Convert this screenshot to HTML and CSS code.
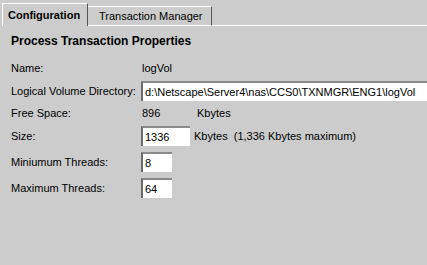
FILE: index.html
```html
<!DOCTYPE html>
<html>
<head>
<meta charset="utf-8">
<link rel="stylesheet" href="styles.css">
</head>
<body>
<div class="tabs">
  <div class="tab active">Configuration</div>
  <div class="tab">Transaction Manager</div>
  <div class="tab-fill"></div>
</div>
<div class="panel">
  <div class="heading">Process Transaction Properties</div>
  <div class="row r-name">
    <div class="label">Name:</div>
    <div class="value">logVol</div>
  </div>
  <div class="row r-dir">
    <div class="label">Logical Volume Directory:</div>
    <div class="field wide">d:\Netscape\Server4\nas\CCS0\TXNMGR\ENG1\logVol</div>
  </div>
  <div class="row r-free">
    <div class="label">Free Space:</div>
    <div class="value num">896</div>
    <div class="unit">Kbytes</div>
  </div>
  <div class="row r-size">
    <div class="label">Size:</div>
    <div class="field size">1336</div>
    <div class="unit">Kbytes&nbsp; (1,336 Kbytes maximum)</div>
  </div>
  <div class="row r-min">
    <div class="label">Miniumum Threads:</div>
    <div class="field small">8</div>
  </div>
  <div class="row r-max">
    <div class="label">Maximum Threads:</div>
    <div class="field small">64</div>
  </div>
</div>
</body>
</html>
```
FILE: styles.css
```css
html, body {
  margin: 0;
  padding: 0;
  background: #cccccc;
}
body {
  width: 427px;
  height: 265px;
  overflow: hidden;
  font-family: "Liberation Sans", Arial, sans-serif;
  font-size: 11px;
  color: #000;
}
.tabs {
  display: flex;
  align-items: flex-end;
  padding: 3px 0 0 2px;
  height: 23px;
}
.tab {
  box-sizing: border-box;
  flex: none;
  height: 20px;
  line-height: 18px;
  white-space: nowrap;
  border-top: 1px solid #ffffff;
  border-right: 1px solid #555555;
  border-bottom: 1px solid #ffffff;
  padding: 0 0 0 11px;
  width: 124px;
}
.tab.active {
  height: 23px;
  line-height: 22px;
  font-weight: bold;
  border-left: 1px solid #ffffff;
  border-bottom: none;
  padding: 0 0 0 5px;
  width: 86px;
}
.tab-fill {
  flex: 1;
  border-bottom: 1px solid #ffffff;
  height: 0;
}
.panel {
  padding: 7px 0 0 11px;
}
.heading {
  font-weight: bold;
  font-size: 12px;
  line-height: 16px;
  height: 16px;
  margin-bottom: 9px;
}
.row {
  display: flex;
  align-items: center;
  height: 20px;
}
.r-dir { margin-top: 3px; }
.r-free { margin-top: 2px; }
.r-size { margin-top: 3px; }
.r-min { margin-top: 6px; }
.r-max { margin-top: 6px; }
.label {
  width: 130px;
  flex: none;
}
.value {
  padding-left: 1px;
}
.value.num {
  width: 51px;
}
.field {
  box-sizing: border-box;
  height: 20px;
  line-height: 18px;
  background: #ffffff;
  border-top: 2px solid #8a8a8a;
  border-left: 2px solid #6a6a6a;
  padding-left: 2px;
  white-space: nowrap;
  overflow: hidden;
}
.field.wide {
  flex: 1;
}
.field.size {
  width: 49px;
}
.field.small {
  width: 31px;
}
.unit {
  padding-left: 4px;
}
```
